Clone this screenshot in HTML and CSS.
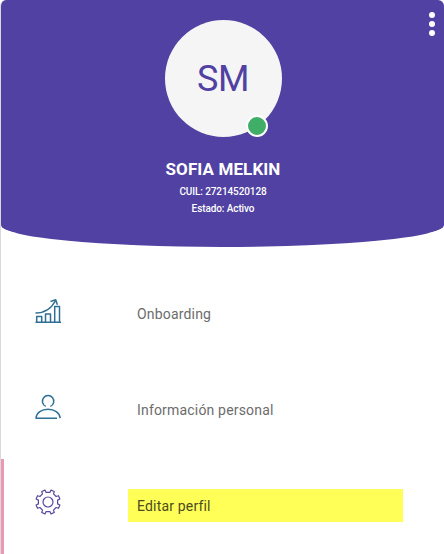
FILE: index.html
```html
<!DOCTYPE html>
<html lang="es">

<head>
    <meta charset="UTF-8">
    <meta name="viewport" content="width=device-width, initial-scale=1.0">
    <title>Perfil</title>
    <link rel="stylesheet" href="styles.css">
</head>

<body>
    <div class="sidebar">
        <header class="profile">
            <button class="more" aria-label="Más opciones">
                <span></span>
                <span></span>
                <span></span>
            </button>
            <div class="avatar">
                <span class="initials">SM</span>
                <span class="status"></span>
            </div>
            <h1 class="name">SOFIA MELKIN</h1>
            <p class="detail">CUIL: 27214520128</p>
            <p class="detail">Estado: Activo</p>
        </header>

        <nav class="menu">
            <a class="menu-item">
                <svg class="icon" width="28" height="28" viewBox="0 0 28 28">
                    <path d="M1.5 25.3H27M2.7 25v-5.500h5V25M11.500 25v-8h5V25M20.700 25V9.500h4.800V25" />
                    <path d="M1.500 16c8.500 0 15.300-3.500 19.800-12M16.500 4.500l5.200-1.700 1.700 5" />
                </svg>
                <span class="label">Onboarding</span>
            </a>
            <a class="menu-item">
                <svg class="icon" width="28" height="28" viewBox="0 0 28 28">
                    <path d="M11.800 13.400a5.700 5.700 0 1 1 4.600 0" />
                    <path d="M23 25.200H2c.4-5.600 5.600-9 12-9s11.600 3.400 12.200 9" />
                </svg>
                <span class="label">Información personal</span>
            </a>
            <a class="menu-item active">
                <svg class="icon" width="28" height="28" viewBox="-14 -14 28 28">
                    <path d="M1.900-9.600 3-11.900 6.300-10.500 5.500-8.100 8.100-5.500 10.500-6.300 11.900-3 9.600-1.900V1.900L11.900 3 10.500 6.300 8.100 5.500 5.500 8.100 6.300 10.500 3 11.900 1.900 9.600H-1.900L-3 11.900-6.300 10.500-5.500 8.100-8.100 5.500-10.500 6.300-11.900 3-9.600 1.900V-1.900L-11.900-3-10.500-6.300-8.100-5.500-5.500-8.100-6.300-10.500-3-11.900-1.900-9.600Z" />
                    <circle r="5" />
                </svg>
                <span class="label">Editar perfil</span>
            </a>
        </nav>
    </div>
</body>

</html>
```
FILE: styles.css
```css
* {
    box-sizing: border-box;
}

body {
    margin: 0;
    background-color: #fff;
    font-family: Roboto, Arial, sans-serif;
}

.sidebar {
    height: 554px;
    overflow: hidden;
    border-left: 1px solid #d9d9d9;
    border-radius: 6px 6px 0 0;
}

.profile {
    position: relative;
    display: flex;
    flex-direction: column;
    align-items: center;
    height: 247px;
    padding-top: 20px;
    padding-left: 1px;
    background-color: #5041a2;
    border-radius: 0 0 50% 50% / 0 0 22px 22px;
    color: #fff;
}

.more {
    position: absolute;
    top: 12px;
    right: 9px;
    display: flex;
    flex-direction: column;
    gap: 3px;
    padding: 0;
    border: none;
    background: none;
    cursor: pointer;
}

.more span {
    width: 6px;
    height: 6px;
    border-radius: 50%;
    background-color: #fff;
}

.avatar {
    position: relative;
    display: flex;
    align-items: center;
    justify-content: center;
    width: 117px;
    height: 117px;
    border-radius: 50%;
    background-color: #f5f5f5;
}

.initials {
    color: #5041a2;
    font-size: 36px;
    letter-spacing: -0.5px;
}

.status {
    position: absolute;
    right: 14px;
    bottom: 0;
    width: 22px;
    height: 22px;
    border: 2px solid #fff;
    border-radius: 50%;
    background-color: #41ae67;
}

.name {
    margin: 22px 0 4px;
    font-size: 17px;
    font-weight: 700;
    line-height: 20px;
    letter-spacing: 0.1px;
}

.detail {
    margin: 0;
    font-size: 10px;
    font-weight: 500;
    line-height: 17px;
    letter-spacing: -0.1px;
}

.menu {
    padding-top: 20px;
}

.menu-item {
    display: flex;
    align-items: center;
    height: 96px;
    padding-left: 33px;
    color: #6c6c6c;
    font-size: 14px;
    cursor: pointer;
}

.icon {
    margin-right: 66px;
    margin-bottom: 8px;
    fill: none;
    stroke: #2f6f96;
    stroke-width: 1.5;
    stroke-linejoin: round;
}

.label {
    width: 275px;
    margin-bottom: 3px;
    padding: 2px 9px 0;
    line-height: 31px;
    letter-spacing: 0.18px;
}

.active {
    padding-left: 30px;
    border-left: 3px solid #ea98b3;
    color: #4b4b20;
}

.active .icon {
    margin-bottom: 10px;
    stroke: #5749a0;
    stroke-width: 1.2;
}

.active .label {
    background-color: #ffff57;
}
```
